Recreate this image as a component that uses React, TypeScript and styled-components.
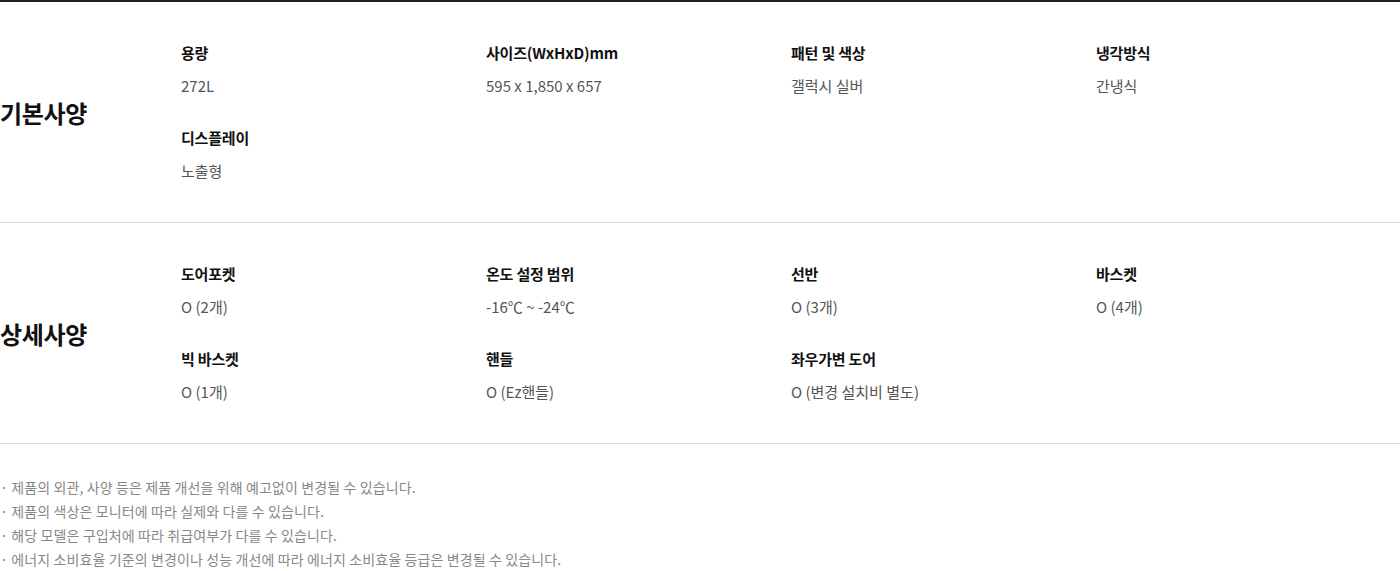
import React from 'react';
import styled, { createGlobalStyle } from 'styled-components';

const GlobalStyle = createGlobalStyle`
  body {
    margin: 0;
    background: #fff;
    font-family: 'Noto Sans CJK KR', 'Noto Sans', sans-serif;
  }
`;

const Wrapper = styled.div`
  border-top: 2px solid #222;
`;

const Section = styled.section`
  display: flex;
  align-items: center;
  padding: 41px 0;
  border-bottom: 1px solid #ddd;
`;

const SectionTitle = styled.h3`
  width: 181px;
  flex-shrink: 0;
  margin: 0;
  font-size: 24px;
  font-weight: 700;
  color: #111;
  letter-spacing: -0.3px;
`;

const SpecGrid = styled.dl`
  flex: 1;
  margin: 0;
  display: grid;
  grid-template-columns: repeat(4, 305px);
  row-gap: 32px;
`;

const SpecItem = styled.div`
  display: flex;
  flex-direction: column;
  gap: 13px;
`;

const SpecLabel = styled.dt`
  font-size: 15px;
  line-height: 20px;
  font-weight: 700;
  color: #111;
  letter-spacing: -0.2px;
`;

const SpecValue = styled.dd`
  margin: 0;
  font-size: 15px;
  line-height: 20px;
  color: #555;
`;

const Notes = styled.ul`
  list-style: none;
  margin: 0;
  padding: 31px 0 0;
`;

const Note = styled.li`
  font-size: 14px;
  line-height: 24px;
  color: #888;
  letter-spacing: 0.12px;
`;

type Spec = { label: string; value: string };

const basic: Spec[] = [
  { label: '용량', value: '272L' },
  { label: '사이즈(WxHxD)mm', value: '595 x 1,850 x 657' },
  { label: '패턴 및 색상', value: '갤럭시 실버' },
  { label: '냉각방식', value: '간냉식' },
  { label: '디스플레이', value: '노출형' },
];

const detail: Spec[] = [
  { label: '도어포켓', value: 'O (2개)' },
  { label: '온도 설정 범위', value: '-16℃ ~ -24℃' },
  { label: '선반', value: 'O (3개)' },
  { label: '바스켓', value: 'O (4개)' },
  { label: '빅 바스켓', value: 'O (1개)' },
  { label: '핸들', value: 'O (Ez핸들)' },
  { label: '좌우가변 도어', value: 'O (변경 설치비 별도)' },
];

const notes = [
  '제품의 외관, 사양 등은 제품 개선을 위해 예고없이 변경될 수 있습니다.',
  '제품의 색상은 모니터에 따라 실제와 다를 수 있습니다.',
  '해당 모델은 구입처에 따라 취급여부가 다를 수 있습니다.',
  '에너지 소비효율 기준의 변경이나 성능 개선에 따라 에너지 소비효율 등급은 변경될 수 있습니다.',
];

function SpecSection({ title, specs }: { title: string; specs: Spec[] }) {
  return (
    <Section>
      <SectionTitle>{title}</SectionTitle>
      <SpecGrid>
        {specs.map(s => (
          <SpecItem key={s.label}>
            <SpecLabel>{s.label}</SpecLabel>
            <SpecValue>{s.value}</SpecValue>
          </SpecItem>
        ))}
      </SpecGrid>
    </Section>
  );
}

function App() {
  return (
    <Wrapper>
      <GlobalStyle />
      <SpecSection title="기본사양" specs={basic} />
      <SpecSection title="상세사양" specs={detail} />
      <Notes>
        {notes.map(n => (
          <Note key={n}>· {n}</Note>
        ))}
      </Notes>
    </Wrapper>
  );
}

export default App;
